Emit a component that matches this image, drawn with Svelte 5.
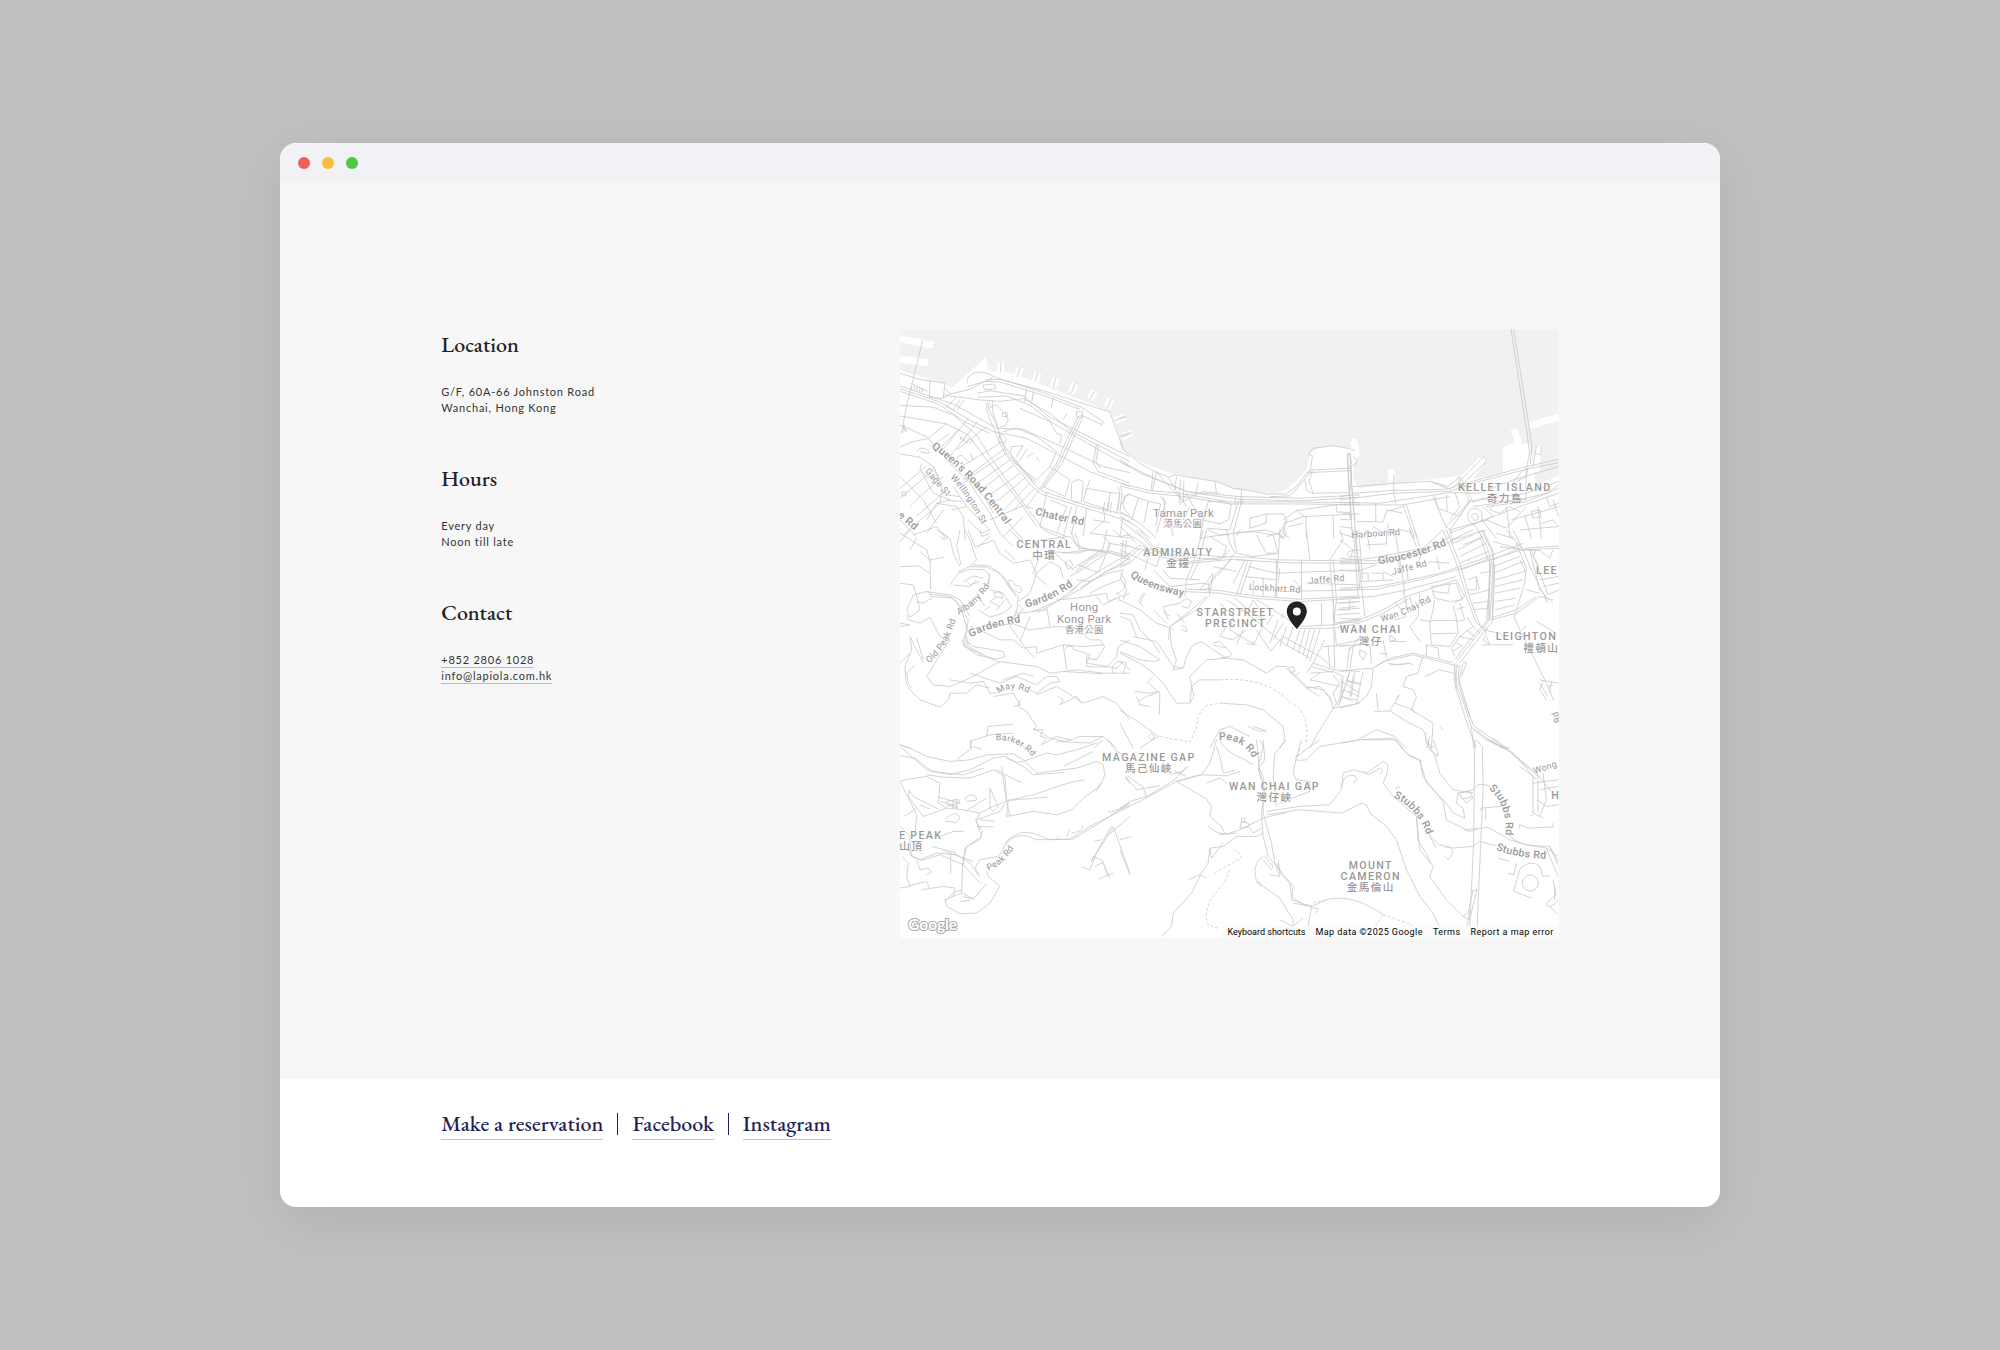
<script>
    // Road geometry, split in tiles. The map uses a 1977 x 1827 grid.
    const tiles = [
        {
            x: -30,
            y: -27,
            roads: [
                "M98 60 48 265 38 320",
                "M30 160 90 178 165 190 160 235 118 232 120 182M30 198 70 212 148 238 190 252 320 325 400 328 520 382 640 440 720 458",
                "M30 206 150 246 235 298 310 335 410 355 500 402 600 455 720 500",
                "M30 214 145 252 228 308 300 340M62 190 112 214M66 200 64 210M74 196 72 212M82 200 80 214M90 202 88 216M98 204 96 216",
                "M165 205 180 222 240 208 285 184 330 186 460 226 570 268",
                "M180 222 160 235M232 190C228 165 255 152 285 158L310 168 300 180 232 200",
                "M285 180 330 178 460 212 660 276 668 300 700 385M310 170 460 218 575 262",
                "M278 196 312 192 318 206 284 210ZM262 220 300 212 400 228 480 292 640 372 720 410",
                "M160 225 270 240 330 244 400 236 480 280 545 335 720 425M262 232 350 228 420 256 490 310 610 380 720 442",
                "M300 244C290 260 300 280 320 310L330 350 350 400 430 490 460 515 600 560 690 580 720 590",
                "M292 246C285 270 300 300 318 340L330 370 345 400 420 492 452 522 560 556 720 605",
                "M308 244C302 270 322 320 336 366L380 430 440 490M300 262 318 255 345 280 355 300 345 318 330 320",
                "M338 278h14v12h-14ZM390 265 480 305 500 340 515 345 510 372M620 372 610 430 625 455 720 490M626 372 618 426 632 446",
                "M560 275h18v16h-18ZM575 262 640 305 636 314 570 284M565 290 530 360 500 430 440 520 410 560M572 292 540 356 508 430 452 510M580 290 550 355 516 432 460 505",
                "M410 206 404 246M430 214 426 244M490 232 484 262M530 282 520 298",
                "M30 256 130 262 190 285 260 345 300 410 350 480 405 555 460 630 530 660M30 288 170 312 235 345 290 420 400 560 440 620",
                "M30 315 110 350 180 430 240 490 300 580 330 640M210 240 190 270 170 260 200 232M222 240 200 272",
                "M235 295 150 400M262 305 180 410M290 320 200 390M170 310 110 360",
                "M330 370 240 425 205 445M345 385 220 480M350 400 250 465 210 498M360 420 262 490M372 435 280 505M390 460 300 525M405 475 320 545M420 490 340 572M435 505 370 570",
                "M205 420C195 410 215 400 222 412L238 428M208 350 232 370M216 348 210 360M226 350 220 364M236 354 230 370M246 358 242 372",
                "M330 340 350 355 345 370 325 365ZM340 335 380 324 440 350 500 395 480 440 440 480 400 450 360 400 365 380 400 378",
                "M400 376 378 412M412 386 388 424M430 400 410 410M440 412 448 424M380 424 430 486M480 440 540 480 525 530 460 500",
                "M545 490C550 478 575 476 580 486L575 545C560 552 545 545 545 535ZM590 505 660 518 655 570 580 545ZM600 480 590 505M660 518 690 520 680 580",
                "M684 500 690 520 684 570M692 500 697 520 690 575M720 520C695 530 690 560 720 585",
                "M410 560 430 566M470 520 450 620 530 650M480 540 530 560 500 640M545 560 520 650M560 560 545 645M590 565 580 650M640 560 645 600 600 640",
                "M645 545 640 575M655 545 650 578M665 548 660 580M610 600 660 608M700 590 690 650M600 640 720 655",
                "M30 382 60 368 110 356M30 402 90 412 130 440 150 480 110 470 90 450 95 430",
                "M82 395C82 378 120 385 118 400L90 396M30 505 110 438M30 535 130 450M60 560 100 520 160 470M78 590 130 545 170 510",
                "M30 470 100 540 140 610M36 516h12v12h-12ZM96 460 130 520 180 540 140 550 110 600M130 440 155 500 150 550 40 645",
                "M140 550 200 560 220 590 225 660M170 525 210 530M170 540 215 545M185 570 230 560M190 500 230 560 300 630 275 640 235 600",
                "M230 470 290 540 310 580M300 600 405 555M340 650 400 590M356 610 400 660M110 640 160 570M30 600 80 650M70 645 140 620 170 660",
                "M33 340 42 315 50 338M38 340 40 320 46 335M250 420 240 400M180 340 120 382M210 325 150 385"
            ]
        },
        {
            x: 660,
            y: -27,
            roads: [
                "M0 365 10 390 40 412 60 430 100 452 145 472 165 465 290 485 340 505 380 510 450 524M0 295 18 290M0 348 30 338",
                "M0 418 60 460 140 490 200 515 360 530 540 535 720 525M0 425 110 478 210 518 360 538 540 543 720 532",
                "M0 490 90 512 180 520 330 546 500 546 720 548M0 498 90 520 180 528 330 552 500 552 720 554",
                "M110 455 105 480 96 515M100 452 94 510M145 472 180 530 200 560M170 470 165 510M182 480 178 550M192 482 190 545M235 490 225 530M285 485 290 520M365 508 362 550",
                "M130 480 190 545 215 530 250 515 300 520M180 555 200 520 220 560M120 530 138 545 110 640M130 530 140 600",
                "M10 530 30 524 56 534 35 600M56 534 85 544 72 610M85 544 122 552 108 620M0 575 60 610 110 655M0 590 50 620 90 655M0 600 70 655M20 530 0 560",
                "M265 545 250 600 300 612 326 600 335 555 310 545ZM355 545 330 630 260 625M365 545 340 640 240 655M348 530 345 555M370 535 365 555",
                "M220 560 250 600 240 655M390 625V595L440 582 438 610ZM440 582 490 582 500 600 480 640 440 650M340 640 440 630 490 650",
                "M450 522 500 522 535 495 560 460 578 450 690 445 705 430M450 530 510 528 545 490 570 458 690 452M578 452 568 485 580 520 690 518 695 450M555 480 560 510 580 522",
                "M566 402 578 408 572 450 560 460M566 402 580 385 640 377 690 386 705 392M684 402 688 500 695 600M692 402 696 500 705 600M684 402h8M700 410 712 420 705 440M695 420 690 445",
                "M490 600 530 572 640 556 690 552M558 590 560 655M500 600 490 640 510 655M495 610 550 590 720 582M530 572 555 590M650 556V575L680 582 695 575M505 620 550 610M640 586 642 655M475 640 490 625 500 640 485 655Z",
                "M0 620 40 655M150 600 160 650M210 560 190 600M130 480 110 455"
            ]
        },
        {
            x: 1320,
            y: -27,
            roads: [
                "M514 28 562 340 570 400 560 445 558 540M522 28 568 320 576 380 572 430",
                "M0 532 40 520 150 512 320 508 370 492 540 445 657 418M0 540 160 520 330 514 400 490 560 448 657 428",
                "M0 548 120 550 330 518 420 520 520 480 657 440M0 555 110 555 190 555 330 530M380 545 560 520 657 485M400 560 540 540 620 520 657 495M440 560 560 545 657 505",
                "M40 500 170 490 270 484 330 508 345 498M270 484 325 500 360 470M345 498 430 412C442 412 442 424 436 428L355 505",
                "M162 465V520L168 550M30 400 35 480 48 655M22 402 26 480 38 655M22 402h8M50 605 130 606 140 575 190 560M108 550V605",
                "M190 555 225 655M200 555 232 655M280 530 320 625M285 530 296 565 360 590 385 550M320 525 322 575M345 515 360 560 330 600",
                "M355 470 390 545 320 620 340 640M362 470 400 548 430 535M390 545 330 630 440 600 500 625 560 560M330 640 420 605 540 560 657 520",
                "M385 580C388 565 410 560 425 575L428 600 400 615 385 600ZM395 590C400 575 420 580 416 598 405 605 398 600 395 590Z",
                "M470 545 450 570 480 580 510 560 540 575M430 535 480 545 560 538M430 560 460 590 430 605 470 655M500 560 512 655M400 610 430 655M520 490 545 455 565 445 560 470 530 485",
                "M515 600 657 560M540 630 657 620M555 585 575 655M595 560 605 655M640 540 657 590M575 575 600 570 605 590 580 595ZM620 530 630 560 657 550M600 612 640 600 657 620",
                "M140 570 190 580M100 620 130 640 190 630 215 640M145 612V650M208 625 220 655M0 575 30 580 32 600 0 598M0 640 50 655M0 620 40 625M590 380 580 440M585 400 602 405 606 380"
            ]
        },
        {
            x: -30,
            y: 603,
            roads: [
                "M30 10 110 60 120 95 122 180M60 0 30 35M80 25 60 60M90 65 125 95M30 110 85 108 118 130M120 90 160 82M140 0 180 25 190 70 210 110M210 0 200 50 214 105M155 5 175 25M150 20 165 30",
                "M235 0 255 50 290 40 310 30 330 70 370 100 420 90 440 130 420 190 385 215M225 0 240 30 260 90 240 110M300 20 260 55M330 10 370 50M345 60 375 90M270 0 275 20 300 10M360 0 410 50",
                "M205 125 240 110 290 112 330 130 360 175 385 200 380 250M180 165 205 130 240 118 285 120 300 140 290 170M220 155 250 138 280 145M190 165 240 170 260 150M230 155 240 165 270 155M300 130 295 165",
                "M250 105 300 108 345 145 378 200M355 160C350 145 370 150 375 165L390 170C402 185 390 195 380 185L365 178Z",
                "M300 180 340 190 365 230 340 250 300 262 265 240M310 190 330 185 340 205 315 200ZM320 200 300 215 330 230M285 240 300 230M345 210 320 240M260 190 285 230",
                "M440 130 480 95 510 110 520 145M445 90 430 130 470 165M470 65 560 70 600 60 720 80M495 70 550 120M520 70 590 60M525 100 540 90 550 105 535 120ZM450 30 540 20 570 60",
                "M540 0 560 45 600 60 650 65 720 90M555 10 570 55 640 62M545 120 640 55 650 0M555 125 600 85 645 60M562 130 650 70M540 140 560 128 600 90 650 65",
                "M565 105 625 128 650 70M655 40 720 50M660 40 650 62 700 72M640 20 660 40 655 66M670 0 690 20 720 15M700 30 695 80M710 30 705 80",
                "M720 70 650 110 570 160 510 210 430 245 390 250M720 85 640 130 570 180 500 215 440 250M720 95 650 125 570 175M560 150 600 155 655 130 700 120 690 150 650 165 600 190",
                "M500 210 560 205 650 190M620 200 640 225 690 200 685 215M650 192 655 215 680 205M690 130C715 150 712 180 680 190L700 200 720 190M540 190 570 160",
                "M30 160 70 165 80 200 90 240 60 262 50 240 70 195 110 185 120 190 125 205 100 220 80 215M50 255 55 270 90 280 120 262",
                "M110 185 180 195 210 210 240 260M120 192 180 200 200 215 235 270 225 330 250 350 340 365 345 380 320 388 260 375 220 345",
                "M125 200 190 205 215 240 232 300 218 335 222 350 290 380 330 400M240 290 290 310 330 330 370 330 400 355 440 350 440 370 520 345 580 350 640 345",
                "M216 330 238 345M218 340 280 375M235 340 230 320M120 262 150 320 180 330M290 290 370 282 420 300 500 290 560 296 600 330 630 330 645 350 620 390 590 385",
                "M380 240 360 290 400 345 420 370 435 385M390 250 380 280M385 225 400 240 370 260M390 335 420 260M470 232 480 290M425 245 470 240",
                "M180 330 160 360 110 440 130 465 180 470 240 445 330 395 400 405 440 410 480 430 520 425 560 420 640 430 680 430 720 430",
                "M100 400 60 320 65 360 45 410 48 460 60 480 90 510 150 532 175 510 180 490 230 490 260 465 300 475",
                "M30 280 60 285 30 290M30 400 60 370M75 405 50 430 55 460 65 475M80 325 100 390M180 450 240 460 280 455 300 490 320 490",
                "M240 430 330 460 380 440 440 465 470 440 500 440 510 455 480 460 440 490 420 480M340 450 400 430 430 440",
                "M440 495 500 470 550 500 580 520 640 500 680 520 720 570M505 500 520 510 510 525 560 500 575 520M310 500 370 490 390 525 370 530M390 510 385 530 410 545 440 590 430 600",
                "M520 345 530 420M525 360C530 345 550 345 550 360M550 358 600 375 590 400 640 408 680 415M590 375V410L650 412 680 380 685 350 720 330M670 430C660 410 680 390 690 395L720 420M675 420 700 395",
                "M290 620 295 590 370 583M245 660 240 635 300 615 370 610M430 600 460 600 450 620 470 625 455 645 500 620 540 630M430 595 480 625 530 635 570 620 640 620 680 655M500 635 600 640 640 620M30 645 60 655M520 425 640 432"
            ]
        },
        {
            x: 660,
            y: 603,
            roads: [
                "M0 95 60 45 120 70 210 95 330 80 380 82 480 90 600 92 720 90M0 105 60 55 120 80 210 100 340 88 480 98 600 100 720 98",
                "M50 0 100 60 180 80 300 90 330 60M60 0 100 50 190 70 320 82M40 20 80 50 30 100 0 112M120 80 110 110 0 60M90 60 75 120",
                "M0 40 60 60M20 10 50 40M250 0 220 100 200 150 195 200M260 0 235 100 210 150M320 0 330 40 345 70 300 130 265 160 270 200M335 90 290 130 270 165",
                "M270 20 320 50 310 80M265 0 300 15 330 15M340 10 400 5 460 15 475 70 400 80 350 70ZM410 15 440 70 470 70M480 0 475 90 465 205M560 0 570 90M660 0 670 30 630 90",
                "M100 120 150 170 250 160 270 165M190 185 300 190 400 205 540 215 720 205M200 178 300 182 400 198 540 208 720 198M130 120 150 145 240 150",
                "M280 110 350 125M385 90 350 195M395 95 360 195M375 90 340 160M350 90 395 92M385 110 470 130 720 120M375 140 470 150M470 90V205M480 115 475 160",
                "M545 92V210M630 95 640 210 645 420M640 90 650 210 640 290M700 0 715 200M708 0 720 180M400 150V195M430 145V200M480 185 720 180M560 160 720 165M520 150 550 180",
                "M720 60C690 60 670 70 690 80L720 82M480 18 490 8 500 18 490 26ZM360 0 350 20M240 180 265 150 280 130 270 190M245 180 275 175",
                "M265 200 230 240 180 270 150 290 145 330M260 200 215 240 150 290M0 210 60 240 110 280 140 290 160 300M0 140 20 180 10 210M70 190 55 215 70 230M75 190 60 220",
                "M130 230 180 220 200 205 215 215 205 235 185 230M130 230 145 270M130 245 150 260M185 290C190 282 205 295 200 305L185 300M100 240 140 280M170 250 195 280",
                "M150 300 155 350 170 390 160 420 190 415 200 380 220 345 245 335 280 360 320 385 370 390 440 430 470 410 500 410 530 440 560 470 610 480 640 520",
                "M280 340 300 335 335 370 330 380 300 385M280 345 320 355M560 475 600 470 630 500 640 535 720 520M505 415 520 410 525 425 510 430M525 440 540 425",
                "M0 250 40 255 60 300 100 340 120 370M0 260 30 270 50 320M0 330 60 350 120 390 105 395 60 390 0 365M40 320 110 335 160 410 190 415",
                "M0 370 60 400 100 430 130 460 170 520 210 520 215 470 240 450 300 450M0 395 20 400 10 430M80 460 100 440M85 460 120 490 118 555M45 485 90 490 120 485M50 500 60 525 90 530M55 515 80 500 110 490",
                "M210 520 222 500 210 440 260 390 320 385M500 415 560 475 600 500M0 540 60 580 115 620 60 655M85 620 95 610 105 622 95 630ZM0 580 40 655",
                "M410 210 500 265 535 295M535 290 640 285 720 270M530 296 640 295 720 280M320 210 380 250 430 290 490 340 570 385M345 205 400 250 440 270M300 220 340 260 330 300 380 330 410 345",
                "M370 300 350 345M375 230 350 260M430 290 400 345 380 340M410 300 450 360M460 255 440 285M475 270 450 340M490 280 460 330M500 290 480 350M520 290 500 350M540 300 520 360M555 300 535 370M570 300 550 375M585 300 560 385M600 300 570 395M615 330 580 400 560 430",
                "M450 365 490 320 600 380 640 415M320 290 300 320 340 330 380 300M400 210 380 250M400 210 420 240M490 250 485 265M605 220V290M640 210 645 280 720 265M650 220 720 215M650 240 720 235M650 255 720 250",
                "M610 350 720 345M580 400 640 420 720 425M575 410 640 428M600 430 570 450 660 470M625 350 630 415M645 300 650 345 720 330M690 350 680 425M720 320 690 360M570 430 640 425 670 440 665 490 650 525",
                "M680 450 720 465M670 480 720 500M665 500 700 515M690 425 680 460 655 530M700 440 690 500M640 435 660 460 640 490 650 520 600 600 570 655",
                "M270 655 300 600 330 590 390 620M300 520 380 525 430 540 490 590 495 630 480 655M385 590 420 605 440 600M400 590 430 600 440 610"
            ]
        },
        {
            x: 1320,
            y: 603,
            roads: [
                "M0 85 60 90 120 80 250 55 310 0M0 95 110 92 250 65 330 20M0 102 110 100 260 70 340 30 440 0M0 175 110 170 190 155 300 130 420 90 550 40",
                "M0 180 110 178 250 148 420 100 560 55 657 48M0 120 50 125 110 105M60 155 160 150M65 130H85V150M95 130H130V150M130 125 160 140M200 110 205 150M230 110 250 60M290 80 300 120M265 95 330 100",
                "M0 205 100 200 200 180 350 140M0 265 60 270 120 245 200 200 350 150M0 280 70 275 130 250 210 205M0 220 60 215M0 235 50 230M30 210V240H0",
                "M45 0 50 60 60 120 75 260M55 0 62 60 68 150M80 0 90 60M80 45 140 42V0M165 0 190 150 195 190M210 0 230 50M225 0 240 50M175 75 180 130M0 30 40 60 30 90",
                "M310 0 350 100 380 200 410 280 445 300M320 0 360 100 390 205 420 285M330 0 340 40 400 15M415 0 445 60 460 110 455 200 450 270 400 330 350 395",
                "M425 0 455 60 465 110 462 200 458 275 410 335 360 400M430 0 462 70 458 270M420 20 450 100 445 270 390 330 345 390M450 90V270M455 100 440 270",
                "M460 90 550 50M460 110 540 80M462 130 550 95M465 150 555 125M465 170 550 150M465 190 540 175M465 215 530 205M465 240 525 225M455 270 530 250 600 200 640 210M460 262 530 240 590 200",
                "M355 60 430 20M360 80 440 40M360 100 445 65M365 120 450 85M370 45 420 25M335 30 400 0M390 195 450 180M400 220 445 215M385 150 410 140 420 180M420 130 450 125M400 240 445 235M410 140V180H385",
                "M500 0 550 60 575 120 625 220M520 0 545 50M530 40 560 115 555 160 530 240M470 10 520 25M460 35 530 55M480 50 550 60M545 60 657 55M570 60 600 180 640 220M575 60 625 195 657 180",
                "M550 60 600 62 630 85 640 60M590 60 580 80 600 110M540 90 560 130M600 150 657 140M610 170 657 160M615 195 620 215M560 180 600 190M523 262 530 240M523 262 540 300M545 300 560 290M590 275 650 310",
                "M275 170 350 160 360 190 370 210 330 215 285 205ZM330 160 325 190 280 185M350 150 375 200 345 220M285 210 280 240 270 280 275 345 330 350 355 310 350 265 340 225M275 272H350M275 312 350 310M360 220 375 270 350 275M375 230 350 240",
                "M240 270 275 275M380 260 400 290 360 320 400 330M360 320 335 355 345 380M350 340 370 350M340 365 360 350M400 290 420 310M380 300 405 320M420 285 440 310 430 330 450 345 440 320",
                "M425 345 520 345M430 300 480 310 500 330M240 190 235 260 210 290 240 335M195 210 205 240M210 200 220 235M165 215 200 260 165 270M190 185 200 220",
                "M100 415 130 395 220 375 340 405 360 410M110 410 150 385 220 370 340 398M250 380 240 410 235 430M260 378V345L295 355 298 385M145 400 175 405 210 400 220 405M150 405 200 402",
                "M30 420 40 350 60 340 90 345 95 400M60 360 80 370 70 390 60 375ZM130 330 140 385M120 370 145 372M150 335H200M150 315 170 330 150 335ZM100 415 40 420 0 425M0 350 25 345",
                "M100 415 95 470 80 500 50 522 0 535M30 425 20 455 65 460M5 455 60 490M0 500 50 510M15 470 0 520M45 425 35 500M70 425 50 520M0 445C15 460 0 490 0 490",
                "M235 430 200 440 190 470 220 480 230 500 215 540 280 580 275 655M215 540 230 550M255 440 300 420 340 430M110 490 115 540M105 545 150 543 200 575 250 600 255 610 265 655M180 495 150 543M165 520 220 540M175 495 170 510M260 610C250 630 270 640 260 655M270 620 265 640 285 655",
                "M345 400C340 450 345 470 360 510L385 590 410 655M352 402C346 450 350 470 368 510L395 590 402 655M360 405C352 440 356 470 376 520L402 588 490 650 510 655M370 400 358 450 390 560M345 410 350 480M365 440 380 400 370 395M402 600 440 630 490 655M395 592 460 638 500 660",
                "M540 300 620 460 642 512M600 450 657 460M610 455 600 480 620 510M625 470 640 465M600 460 625 500M635 455 630 490",
                "M0 640 50 632 110 600 165 620 200 655M300 590 310 600"
            ]
        },
        {
            x: -30,
            y: 1233,
            roads: [
                "M30 15 60 25 110 50 180 65 240 60 290 45 370 42 400 60 440 100 560 85 620 65 640 75 645 105 630 140 580 175 545 210 500 225 430 215 350 230 355 180",
                "M30 20 70 55 110 90 180 105 240 90 310 55 345 50 400 80 430 105 520 98M30 48 75 55 125 95 220 105 280 85M245 0 240 30 200 60M248 20 275 28",
                "M30 125 45 120 110 110 150 130 145 190 170 205 220 210 270 220 310 200 355 182 430 165 540 128 585 120M355 182 475 172",
                "M55 150 70 170 145 208M58 150 55 170 100 230 170 205M30 125 60 185 80 225 75 285M300 145 325 200 310 215 300 205ZM225 215 290 175M335 80 340 120 350 185 360 230",
                "M110 105 160 112 240 115 310 90 345 110 350 185M320 90 375 120 395 128M350 55 380 68 400 65 470 40 500 45M500 45 560 30 620 10M520 80 560 60 610 35",
                "M165 240C180 220 205 215 210 235L200 248 165 245M225 180C230 160 265 160 258 182L228 185M170 185 205 178 210 190 180 195ZM170 195 205 205M190 180 188 205M200 180V205",
                "M145 172 210 190M150 185 200 200M270 220 260 240 330 215 345 192M270 240 315 245M260 260 310 262M258 240 275 290 225 325 220 375 270 430",
                "M255 240 278 275 270 300 230 320 218 372 215 460M30 260 60 290 60 345 90 360 140 340 200 345 240 370 265 405",
                "M60 310 65 350 95 362 150 345 220 375M150 290 190 275 220 275M125 320 200 340M75 285 60 300M90 195 120 208M35 350 55 370 50 410 60 440 30 445",
                "M80 360 90 390 115 385 125 398 110 405M60 437 110 425 118 445M95 450 160 440 195 445 190 470M182 345V400M165 335 250 365M42 230 80 205",
                "M340 330C345 300 370 285 400 278L430 280 480 300 540 298 600 260 720 200M345 315C360 300 370 285 410 288L440 300 550 298 620 255 720 190",
                "M340 330 325 350 270 360 255 385 270 410M290 395 295 410 330 440 300 490 260 520 210 522 170 500 165 480 215 460 250 478 290 432M218 470 250 478M165 485 190 460 215 450M210 485 240 482",
                "M505 290 500 300M530 290 540 270M545 280C570 275 580 270 578 255M660 210C650 220 660 225 720 190M670 260 720 400M670 262 620 340 600 390 575 382",
                "M665 258 605 365 610 350 635 360 660 415M615 380 640 368M625 418 670 400M612 305 635 300M720 230 650 290M640 370 655 410M440 45 400 20 380 0M640 0 610 25M655 0 675 30 720 60M710 110 720 130M630 130 620 155"
            ]
        },
        {
            x: 660,
            y: 1233,
            roads: [
                "M0 210 60 185 170 125 245 105 270 70 290 0M0 205 30 185 80 170 165 120 200 80M170 125 240 105 320 108 360 95M170 125 260 178 275 200 270 230 305 260 315 280",
                "M18 110C15 125 40 130 50 150L120 138M25 110 70 142 80 175M300 0C310 25 330 40 375 60L400 75M260 130 300 115 320 130M290 20 300 50 310 100 345 92M200 110 165 95M150 105 190 95 205 80",
                "M410 0 420 100 435 150 425 220 430 290 445 350 520 440 515 480 575 500 620 480M420 0 430 20 415 80 430 110 430 220 455 310 465 370 480 410",
                "M430 0 435 60 420 80M500 0 465 40 460 110 470 200M415 85 425 120M440 215 540 200 630 195 665 150 670 100 700 90 740 100 790 65C810 70 808 90 790 130L820 170",
                "M442 225 540 210 665 220 725 190 740 195 750 220 800 260 830 300 860 390 900 470 940 520 960 565M430 235 500 218",
                "M665 145C670 105 690 105 705 108L712 120 700 130M730 95 745 105 780 85C790 85 790 100 780 102M830 150C825 135 840 140 840 145M545 0 530 50 520 100 530 120 570 125 570 155 480 190",
                "M530 50 600 0M535 62 560 60 600 20 720 0 820 -5M820 -5 870 50 900 60 910 110 970 185 980 240 1040 270 1075 265M730 0 830 0 860 40 905 65M900 60 920 130 980 190 1000 220 1035 235 1030 205 1010 190 1015 160 1060 150",
                "M925 0 930 30 955 50 950 25 940 0M930 20 945 45 960 100 1000 150 1060 160M1015 160 1050 155 1060 175 1040 190ZM1020 165 1030 178 1060 170M1060 150C1070 130 1090 130 1110 140",
                "M1065 0 1062 300 1050 560M1070 0 1088 20 1090 150 1072 565M1080 215 1085 205 1140 200 1165 205M1098 205V240M1165 265 1170 290 1200 310 1280 325 1315 350",
                "M820 170 890 230 900 330 940 380 930 410 980 480 1030 530 1045 520 1060 450M890 230 895 300 935 370M930 290 960 315 1000 325 1060 320 1080 305 1130 318M925 270 930 290 950 325",
                "M975 325C990 315 1000 330 997 345L985 360 975 350M1030 265C1050 290 1080 255 1110 265L1170 300 1230 318 1290 320 1315 375M1060 455 1072 448 1050 540 1030 530M1040 565 1052 510",
                "M1100 0 1165 30 1250 100 1315 180M1110 0 1170 35 1255 110M1120 -5 1180 40 1250 120M1200 80 1240 110 1240 220 1270 235M1255 110V220M1240 130 1315 120M1260 150 1315 140M1270 100 1280 180 1260 230M1250 180 1280 200 1315 195",
                "M1200 255 1225 265 1300 262V250M1200 255V268M1135 355 1170 365M1190 370 1182 405 1165 400M1182 455 1200 390C1215 365 1255 365 1262 385L1270 410 1290 408M1182 455 1235 475",
                "M1208 430a24 24 0 1 0 48 0a24 24 0 1 0 -48 0M1280 325 1315 410M1290 320 1315 365M1300 420 1310 465 1280 490C1280 505 1300 505 1315 480M1290 500 1315 525M1240 225 1230 230M1305 440V480",
                "M265 260C280 270 300 290 330 280L360 270 430 235M360 265 365 245 385 250 388 262ZM365 235h10v12h-10ZM390 265 400 280 425 265M350 290 410 290 430 280M300 285 350 280",
                "M350 290 310 320 270 325 265 370 245 400 215 460 160 520 155 560 125 590M270 325 275 355 310 310M205 420 240 405 260 415M430 350C400 370 400 410 415 430L480 475 520 540 520 560",
                "M435 350 460 380 455 390 430 360M475 360 480 400 510 430 515 470 550 495 575 500 565 560M470 370 485 400M450 405 480 410M575 505 595 505 590 520M410 430C415 420 425 430 420 440M520 560 550 535M520 490 575 500M480 540 520 560",
                "M620 480C680 465 740 490 790 525M0 300 35 290M0 330 30 405"
            ]
        }
    ];

    const trails = [
        "M960 1053C1060 1045 1130 1075 1170 1120 1215 1140 1225 1180 1220 1240",
        "M780 1223 870 1240 890 1195 895 1160 920 1130 960 1123",
        "M945 1633 1020 1590 1025 1580 1000 1560M990 1623 975 1660 930 1715 918 1760 925 1790 960 1800",
        "M1240 1723 1280 1712M1450 1758 1540 1790M1450 1760 1420 1800M1200 1260 1190 1300"
    ];

    const fingerPiers =
        "M302 130 303 102M352 145 360 116M406 158 414 131M460 174 468 147M514 192 526 163M570 212 584 185M622 236 634 210M645 275 675 263M665 325 695 312";

    const piers = [
        "M0 30 100 48M0 90 85 102",
        fingerPiers,
        "M1890 290 1977 265M1842 300 1858 342M1475 420V460M1362 335 1370 370M1912 375 1908 430M1915 355 1916 375"
    ];

    // size: place, park, park-zh, road or street
    const labels = [
        { text: "CENTRAL", x: 433, y: 657, size: "place" },
        { text: "中環", x: 433, y: 691, size: "place" },
        { text: "ADMIRALTY", x: 835, y: 681, size: "place" },
        { text: "金鐘", x: 835, y: 715, size: "place" },
        { text: "STARSTREET", x: 1007, y: 861, size: "place" },
        { text: "PRECINCT", x: 1007, y: 895, size: "place" },
        { text: "WAN CHAI", x: 1413, y: 913, size: "place" },
        { text: "灣仔", x: 1413, y: 949, size: "place" },
        { text: "KELLET ISLAND", x: 1815, y: 485, size: "place" },
        { text: "奇力島", x: 1815, y: 520, size: "place" },
        { text: "LEE", x: 1942, y: 735, size: "place" },
        { text: "LEIGHTON", x: 1880, y: 934, size: "place" },
        { text: "禮頓山", x: 1925, y: 970, size: "place" },
        { text: "MAGAZINE GAP", x: 747, y: 1298, size: "place" },
        { text: "馬己仙峽", x: 747, y: 1331, size: "place" },
        { text: "WAN CHAI GAP", x: 1124, y: 1383, size: "place" },
        { text: "灣仔峽", x: 1124, y: 1418, size: "place" },
        { text: "MOUNT", x: 1413, y: 1621, size: "place" },
        { text: "CAMERON", x: 1413, y: 1654, size: "place" },
        { text: "金馬倫山", x: 1413, y: 1687, size: "place" },
        { text: "E PEAK", x: 62, y: 1530, size: "place" },
        { text: "山頂", x: 34, y: 1565, size: "place" },
        { text: "H", x: 1968, y: 1411, size: "place" },
        { text: "Tamar Park", x: 851, y: 565, size: "park" },
        { text: "添馬公園", x: 849, y: 595, size: "park-zh" },
        { text: "Hong", x: 553, y: 847, size: "park" },
        { text: "Kong Park", x: 553, y: 882, size: "park" },
        { text: "香港公園", x: 553, y: 913, size: "park-zh" }
    ];

    const roadLabels = [
        { text: "Queen's Road Central", d: "M94 357Q205 428 330 606", size: "road" },
        { text: "Gage St", d: "M74 427 150 515", size: "street" },
        { text: "Wellington St", d: "M150 447Q200 495 256 606", size: "street" },
        { text: "Chater Rd", d: "M405 557Q480 578 580 594", size: "road" },
        { text: "e Rd", d: "M-8 562 64 621", size: "road" },
        { text: "Harbour Rd", d: "M1356 627 1530 616", size: "street" },
        { text: "Garden Rd", d: "M378 836Q465 817 545 750", size: "road" },
        { text: "Garden Rd", d: "M213 926Q260 895 380 877", size: "road" },
        { text: "Albany Rd", d: "M176 858Q240 825 280 754", size: "street" },
        { text: "Old Peak Rd", d: "M87 1003Q150 955 174 845", size: "street" },
        { text: "May Rd", d: "M296 1095Q340 1060 410 1106", size: "street" },
        { text: "Barker Rd", d: "M287 1235Q360 1230 410 1300", size: "street" },
        { text: "Queensway", d: "M690 742Q750 789 885 807", size: "road" },
        { text: "Lockhart Rd", d: "M1047 783 1230 793", size: "street" },
        { text: "Jaffe Rd", d: "M1227 765 1360 754", size: "street" },
        { text: "Jaffe Rd", d: "M1478 738 1610 704", size: "street" },
        { text: "Gloucester Rd", d: "M1436 706Q1540 695 1670 636", size: "road" },
        { text: "Wan Chai Rd", d: "M1446 879Q1540 855 1630 794", size: "street" },
        { text: "Peak Rd", d: "M957 1234Q1035 1225 1070 1310", size: "road" },
        { text: "Stubbs Rd", d: "M1481 1406Q1560 1440 1590 1545", size: "road" },
        { text: "Stubbs Rd", d: "M1767 1380Q1829 1430 1816 1540", size: "road" },
        { text: "Stubbs Rd", d: "M1788 1563Q1860 1592 1970 1590", size: "road" },
        { text: "Wong N", d: "M1905 1336 2010 1300", size: "street" },
        { text: "Rd", d: "M1984 1178 1964 1120", size: "street" },
        { text: "Peak Rd", d: "M265 1626Q320 1605 355 1535", size: "street" }
    ];

    const footerLinks = [
        { text: "Make a reservation", href: "#reservation" },
        { text: "Facebook", href: "#facebook" },
        { text: "Instagram", href: "#instagram" }
    ];
</script>

<div class="desktop">
    <div class="window">
        <div class="titlebar">
            <span class="dot close"></span>
            <span class="dot minimize"></span>
            <span class="dot zoom"></span>
        </div>

        <main>
            <div class="info">
                <section>
                    <h2>Location</h2>
                    <p>G/F, 60A-66 Johnston Road<br />Wanchai, Hong Kong</p>
                </section>
                <section>
                    <h2>Hours</h2>
                    <p>Every day<br />Noon till late</p>
                </section>
                <section>
                    <h2>Contact</h2>
                    <p>
                        <a href="tel:+85228061028">+852 2806 1028</a><br />
                        <a href="mailto:info@lapiola.com.hk">info@lapiola.com.hk</a>
                    </p>
                </section>
            </div>

            <div class="map">
                <svg viewBox="0 0 1977 1827" role="img" aria-label="Map">
                    <path
                        class="water"
                        d="M0 0H1977V440L1910 470 1890 345 1840 343 1815 352 1808 365 1810 432 1720 450 1760 395 1752 385 1740 385 1685 440 1575 453 1470 465 1380 478 1360 455 1362 415 1380 375 1368 330 1355 330 1358 358 1300 348 1260 356 1232 372 1222 420 1190 455 1150 488 1110 494 1010 482 950 458 810 433 720 398 670 363 655 310 635 255 620 243 340 133 265 123 257 85 155 178 130 163 0 123Z"
                    />
                    {#each piers as d}
                        <path class="pier" {d} />
                    {/each}
                    {#each tiles as tile}
                        <g class="roads" transform="translate({tile.x} {tile.y})">
                            {#each tile.roads as d}
                                <path {d} />
                            {/each}
                        </g>
                    {/each}
                    <path class="pier-road" d={fingerPiers} />
                    {#each trails as d}
                        <path class="trail" {d} />
                    {/each}
                    {#each labels as label}
                        <text class="label {label.size}" x={label.x} y={label.y}>{label.text}</text>
                    {/each}
                    {#each roadLabels as label, i}
                        <path id="label-{i}" d={label.d} fill="none" />
                        <text class="label {label.size}">
                            <textPath href="#label-{i}">{label.text}</textPath>
                        </text>
                    {/each}
                    <path
                        class="pin"
                        d="M1191 818C1174 818 1161 831 1161 848C1161 870 1191 900 1191 900C1191 900 1221 870 1221 848C1221 831 1208 818 1191 818ZM1191 836A12 12 0 1 1 1191 860A12 12 0 1 1 1191 836Z"
                    />
                    <text class="logo" x="25" y="1803">Google</text>
                </svg>
                <div class="attribution">
                    <button type="button">Keyboard shortcuts</button>
                    <span>Map data ©2025 Google</span>
                    <a href="#terms">Terms</a>
                    <a href="#report">Report a map error</a>
                </div>
            </div>
        </main>

        <footer>
            {#each footerLinks as link, i}
                {#if i > 0}
                    <span class="divider"></span>
                {/if}
                <a href={link.href}>{link.text}</a>
            {/each}
        </footer>
    </div>
</div>

<style>
    :global(body) {
        background: #c0c0c0;
    }

    .desktop {
        display: flex;
        align-items: center;
        justify-content: center;
        min-height: 100vh;
    }

    .window {
        width: 72%;
        border-radius: 16px;
        overflow: hidden;
        background: #fff;
        box-shadow: 0 14px 56px rgba(0, 0, 0, 0.08);
    }

    .titlebar {
        display: flex;
        align-items: center;
        gap: 12px;
        height: 40px;
        padding: 0 18px;
        background: #f1f1f6;
    }

    .dot {
        width: 12px;
        height: 12px;
        border-radius: 50%;
    }

    .close {
        background: #f15f5a;
    }

    .minimize {
        background: #f8bd3b;
    }

    .zoom {
        background: #4fc843;
    }

    main {
        display: grid;
        grid-template-columns: 459fr 659fr;
        padding: 146px 11.2% 141px;
        background: #f7f7f7;
    }

    section {
        margin-bottom: 47px;
    }

    h2 {
        margin: 0 0 23px;
        font: 500 22px/32px "EB Garamond", "Liberation Serif", serif;
        color: #222;
    }

    p {
        margin: 0;
        font: 400 11px/16px "Proxima Nova", Lato, sans-serif;
        letter-spacing: 0.07em;
        color: #333;
    }

    p a {
        display: inline-block;
        height: 15px;
        color: inherit;
        text-decoration: none;
        border-bottom: 1px solid #bbb;
        vertical-align: top;
    }

    .map {
        position: relative;
        background: #fff;
        border-radius: 4px;
        overflow: hidden;
    }

    svg {
        display: block;
        width: 100%;
    }

    .water {
        fill: #f1f1f1;
    }

    .pier {
        fill: none;
        stroke: #fff;
        stroke-width: 21;
    }

    .roads path,
    .pier-road {
        fill: none;
        stroke: #c8c8c8;
        stroke-width: 2.4;
        stroke-linejoin: round;
    }

    .trail {
        fill: none;
        stroke: #ccc;
        stroke-width: 2.4;
        stroke-dasharray: 9 6;
    }

    .label {
        font-family: Roboto, "Noto Sans CJK TC", sans-serif;
        font-weight: 500;
        fill: #999;
        stroke: #fff;
        stroke-width: 3;
        stroke-opacity: 0.7;
        paint-order: stroke;
    }

    .place {
        font-size: 32px;
        letter-spacing: 4px;
        text-anchor: middle;
    }

    .park {
        font-size: 34px;
        font-weight: 400;
        letter-spacing: 1px;
        text-anchor: middle;
    }

    .park-zh {
        font-size: 28px;
        font-weight: 400;
        letter-spacing: 1px;
        text-anchor: middle;
    }

    .road {
        font-size: 32px;
        letter-spacing: 1px;
    }

    .street {
        font-size: 27px;
        font-weight: 400;
        letter-spacing: 1px;
    }

    .pin {
        fill: #222;
        fill-rule: evenodd;
    }

    .logo {
        font: 700 46px Lato, sans-serif;
        fill: #fff;
        stroke: #aaa;
        stroke-width: 6;
        paint-order: stroke;
    }

    .attribution {
        position: absolute;
        right: 0;
        bottom: 0;
        display: flex;
        gap: 10px;
        padding: 0 5px;
        background: rgba(250, 250, 250, 0.8);
        font: 400 9px/12px Roboto, sans-serif;
        letter-spacing: 0.05em;
        color: #000;
    }

    .attribution a,
    .attribution button {
        padding: 0;
        border: 0;
        background: none;
        font: inherit;
        color: inherit;
        text-decoration: none;
    }

    footer {
        display: flex;
        align-items: center;
        gap: 14px;
        padding: 30px 11.2% 67px;
        font: 500 22px/30px "EB Garamond", "Liberation Serif", serif;
    }

    footer a {
        color: #251f5c;
        text-decoration: none;
        border-bottom: 1px solid #c4c2d4;
    }

    .divider {
        width: 1px;
        height: 22px;
        background: #251f5c;
    }
</style>
